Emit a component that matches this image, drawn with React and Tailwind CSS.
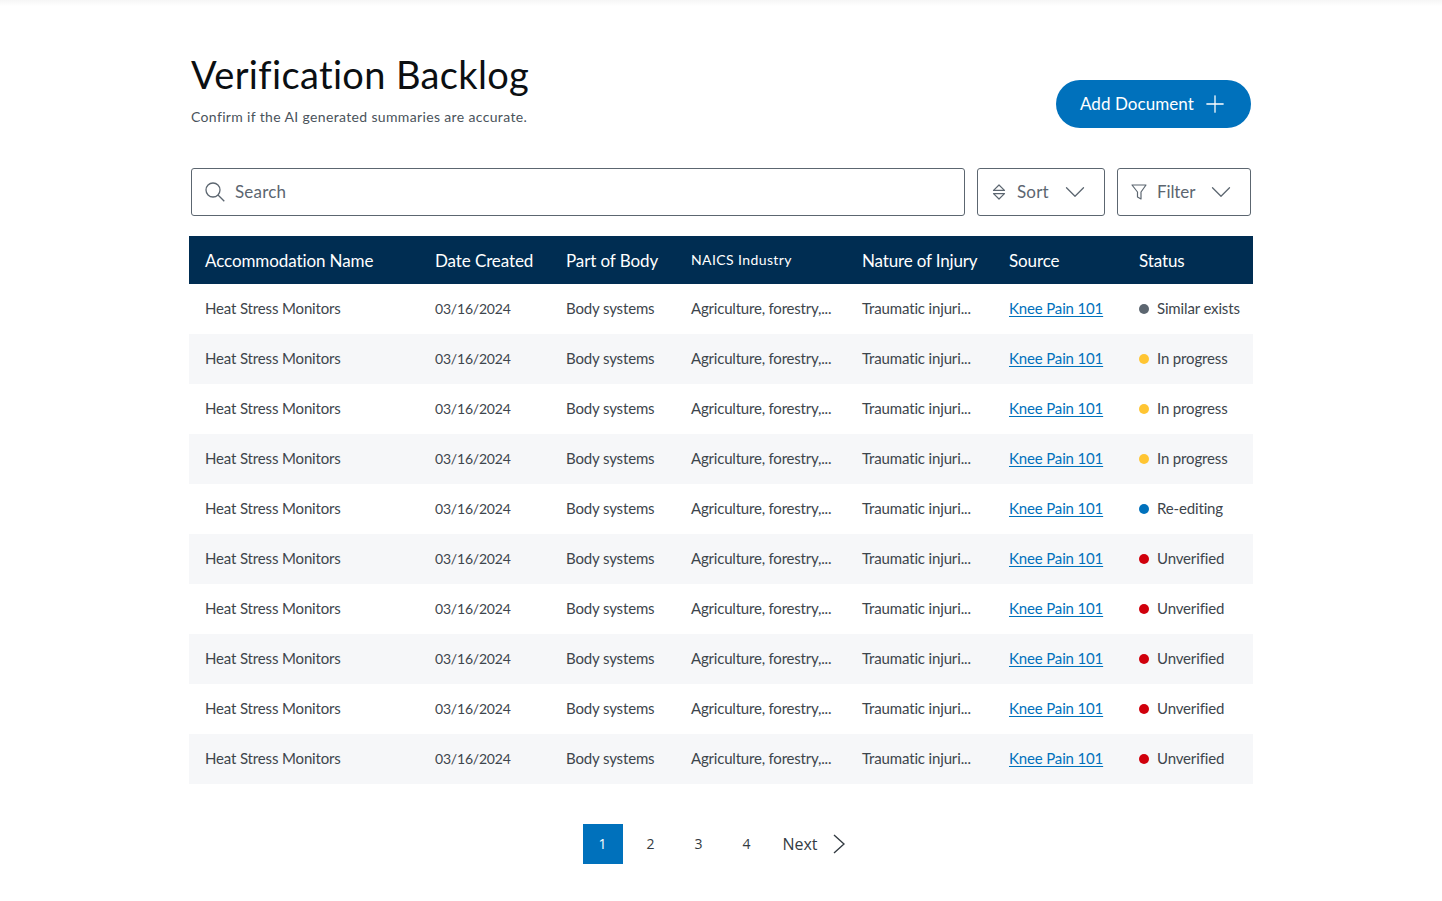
import { ChevronDown, Plus } from 'lucide-react';

const rows = [
  { status: 'Similar exists', dot: 'bg-[#5c6670]' },
  { status: 'In progress', dot: 'bg-[#ffc533]' },
  { status: 'In progress', dot: 'bg-[#ffc533]' },
  { status: 'In progress', dot: 'bg-[#ffc533]' },
  { status: 'Re-editing', dot: 'bg-[#0071bc]' },
  { status: 'Unverified', dot: 'bg-[#d0000c]' },
  { status: 'Unverified', dot: 'bg-[#d0000c]' },
  { status: 'Unverified', dot: 'bg-[#d0000c]' },
  { status: 'Unverified', dot: 'bg-[#d0000c]' },
  { status: 'Unverified', dot: 'bg-[#d0000c]' },
];

function SearchIcon() {
  return (
    <svg width="20" height="20" viewBox="0 0 20 20" fill="none" stroke="#5c6670" strokeWidth="1.3">
      <circle cx="8" cy="8" r="7" />
      <path d="M13 13 L19.3 19.3" />
    </svg>
  );
}

function SortIcon() {
  return (
    <svg width="14" height="16" viewBox="0 0 14 16" fill="none" stroke="#5c6670" strokeWidth="1.2" strokeLinejoin="round">
      <path d="M7 1 L12.5 6.4 H1.5 Z" />
      <path d="M1.5 9.6 H12.5 L7 15 Z" />
    </svg>
  );
}

function FilterIcon() {
  return (
    <svg width="16" height="16" viewBox="0 0 16 16" fill="none" stroke="#5c6670" strokeWidth="1.2" strokeLinejoin="round">
      <path d="M1 1 H15 L10 8 V15 L6.5 13 V8 Z" />
    </svg>
  );
}

export default function App() {
  return (
    <div className="min-h-screen bg-white font-['Lato','Open_Sans',sans-serif] text-[#333b42]">
      {/* top shadow */}
      <div className="h-[6px] bg-gradient-to-b from-[#f6f6f6] to-white" />

      <div className="w-[1060px] mx-auto">
        {/* Title */}
        <div className="flex justify-between items-start pt-[45px]">
          <div>
            <h1 className="text-[38px] leading-[46px] font-normal text-[#0b0f12] tracking-[0.35px]">Verification Backlog</h1>
            <p className="mt-[10px] text-sm leading-5 text-[#4a535b] tracking-[0.35px]">Confirm if the AI generated summaries are accurate.</p>
          </div>
          <button className="mt-[29px] w-[195px] h-12 rounded-full bg-[#0071bc] text-white flex items-center pl-6 gap-[7px] text-[17px] tracking-[0.05px]">
            Add Document
            <Plus size={28} strokeWidth={1.1} />
          </button>
        </div>

        {/* Search, sort, filter */}
        <div className="flex gap-3 mt-[40px]">
          <div className="flex-1 h-12 border border-[#5c6670] rounded-[3px] flex items-center pl-[13px] gap-[10px]">
            <SearchIcon />
            <span className="text-[17px] text-[#5c6670] tracking-[0.2px]">Search</span>
          </div>
          <button className="w-[128px] h-12 border border-[#5c6670] rounded-[3px] flex items-center pl-[14px] text-[#5c6670]">
            <SortIcon />
            <span className="ml-[11px] text-[17px] tracking-[0.2px]">Sort</span>
            <ChevronDown size={34} strokeWidth={0.9} className="ml-auto mr-[12px]" />
          </button>
          <button className="w-[134px] h-12 border border-[#5c6670] rounded-[3px] flex items-center pl-[13px] text-[#5c6670]">
            <FilterIcon />
            <span className="ml-[10px] text-[17px] tracking-[-0.1px]">Filter</span>
            <ChevronDown size={34} strokeWidth={0.9} className="ml-auto mr-[12px]" />
          </button>
        </div>
      </div>

      {/* Table */}
      <table className="w-[1064px] mx-auto mt-[20px] table-fixed border-collapse">
        <colgroup>
          <col className="w-[230px]" />
          <col className="w-[131px]" />
          <col className="w-[125px]" />
          <col className="w-[171px]" />
          <col className="w-[147px]" />
          <col className="w-[130px]" />
          <col className="w-[130px]" />
        </colgroup>
        <thead>
          <tr className="h-12 bg-[#002d52] text-white text-left text-[17px]">
            <th className="pl-4 pt-px font-normal tracking-[-0.1px]">Accommodation Name</th>
            <th className="pl-4 pt-px font-normal tracking-[-0.1px]">Date Created</th>
            <th className="pl-4 pt-px font-normal tracking-[-0.1px]">Part of Body</th>
            <th className="pl-4 font-normal text-sm tracking-[0.4px]">NAICS Industry</th>
            <th className="pl-4 pt-px font-normal tracking-[-0.15px]">Nature of Injury</th>
            <th className="pl-4 pt-px font-normal tracking-[-0.1px]">Source</th>
            <th className="pl-4 pt-px font-normal tracking-[-0.1px]">Status</th>
          </tr>
        </thead>
        <tbody className="text-[15px] tracking-[-0.15px] text-[#3d454c]">
          {rows.map((r, i) => (
            <tr key={i} className={`h-[50px] ${i % 2 === 1 ? 'bg-[#f6f7f9]' : 'bg-white'}`}>
              <td className="pl-4 pb-px">Heat Stress Monitors</td>
              <td className="pl-4 text-sm tracking-[-0.2px]">03/16/2024</td>
              <td className="pl-4 pb-px">Body systems</td>
              <td className="pl-4 pb-px whitespace-nowrap tracking-[-0.2px]">Agriculture, forestry,...</td>
              <td className="pl-4 pb-px whitespace-nowrap">Traumatic injuri...</td>
              <td className="pl-4 pb-px">
                <a href="#" className="text-[#0071bc] underline underline-offset-2">Knee Pain 101</a>
              </td>
              <td className="pl-4 pb-px whitespace-nowrap">
                <span className="flex items-center gap-2">
                  <span className={`w-[10px] h-[10px] rounded-full ${r.dot}`} />
                  {r.status}
                </span>
              </td>
            </tr>
          ))}
        </tbody>
      </table>

      {/* Pagination */}
      <div className="flex items-center justify-center mt-10 pr-[13px] text-sm text-[#333b42] font-['Open_Sans',sans-serif]">
        <span className="w-10 h-10 pr-[2px] bg-[#0071bc] text-white flex items-center justify-center">1</span>
        <span className="w-10 h-10 pr-[2px] ml-2 flex items-center justify-center">2</span>
        <span className="w-10 h-10 pr-[2px] ml-2 flex items-center justify-center">3</span>
        <span className="w-10 h-10 pr-[2px] ml-2 flex items-center justify-center">4</span>
        <span className="ml-[15px] text-base">Next</span>
        <svg width="12" height="20" viewBox="0 0 12 20" fill="none" stroke="#333b42" strokeWidth="1.4" className="ml-[15px] mr-px">
          <path d="M1 1 L11 10 L1 19" />
        </svg>
      </div>
    </div>
  );
}
